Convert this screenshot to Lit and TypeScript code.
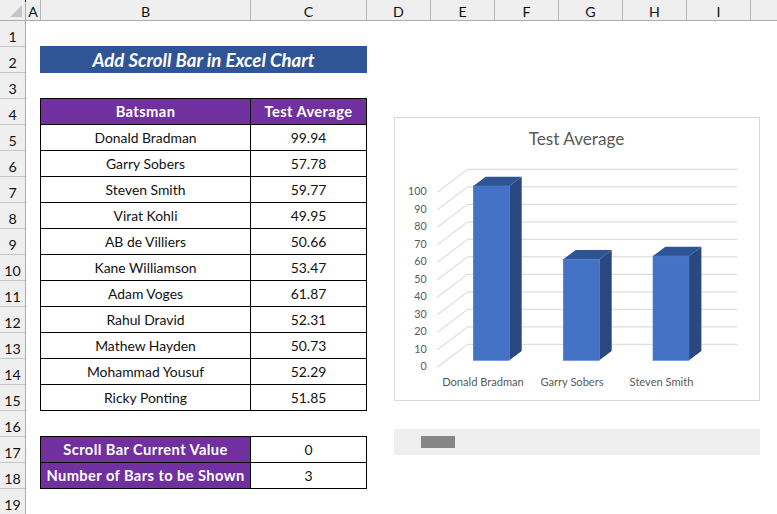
import { LitElement, html, css, svg } from "lit";
import { customElement } from "lit/decorators.js";

const COLS: [string, number][] = [["A", 15], ["B", 210], ["C", 116], ["D", 64], ["E", 64], ["F", 64], ["G", 64], ["H", 64], ["I", 64], ["", 26]];
const PLAYERS: [string, string][] = [
  ["Donald Bradman", "99.94"], ["Garry Sobers", "57.78"], ["Steven Smith", "59.77"], ["Virat Kohli", "49.95"],
  ["AB de Villiers", "50.66"], ["Kane Williamson", "53.47"], ["Adam Voges", "61.87"], ["Rahul Dravid", "52.31"],
  ["Mathew Hayden", "50.73"], ["Mohammad Yousuf", "52.29"], ["Ricky Ponting", "51.85"],
];
const ROWS = Array.from({ length: 19 }, (_, i) => i + 1);
const BARS = [{ x: 78.3, top: 68 }, { x: 168.3, top: 141.3 }, { x: 258, top: 138 }];
const TICKS = [0, 10, 20, 30, 40, 50, 60, 70, 80, 90, 100];

function chart() {
  const x0 = 42.3, x1 = 72.7, x2 = 342.3, front0 = 249.3, back0 = 226.3, step = 17.5;
  return svg`
    ${TICKS.map((t, i) => {
      const by = back0 - i * step, fy = front0 - i * step;
      return svg`
        <path class="grid" d="M${x0} ${fy}L${x1} ${by}L${x2} ${by}"></path>
        <text class="tick" x="31.7" y="${fy + 3}" text-anchor="end">${t}</text>`;
    })}
    ${BARS.map(({ x, top }) => svg`
      <path class="side" d="M${x + 36} ${top}l12.4 -9.3V233L${x + 36} 242.3Z"></path>
      <path class="cap" d="M${x} ${top}l12.4 -9.3h36L${x + 36} ${top}Z"></path>
      <rect class="front" x="${x}" y="${top}" width="36" height="${242.3 - top}"></rect>`)}
    <text class="title" x="181.5" y="27">Test Average</text>
    <text class="cat" x="88" y="268">Donald Bradman</text>
    <text class="cat" x="177" y="268">Garry Sobers</text>
    <text class="cat" x="266.5" y="268">Steven Smith</text>`;
}

@customElement("app-root")
export class AppRoot extends LitElement {
  static styles = css`
    :host { display: block; width: 777px; height: 514px; overflow: hidden; background: #fff; font-family: "Lato", "Liberation Sans", sans-serif; font-size: 13.9px; color: #111; }
    .heads { display: flex; height: 21px; background: #efefef; border-bottom: 1px solid #ababab; box-sizing: border-box; }
    .corner {
      width: 26px; flex: none; display: flex; align-items: flex-end; justify-content: flex-end; box-sizing: border-box; padding: 0 4px 3px 0;
      background: linear-gradient(#222, #222) 100% 0 / 1px 2px no-repeat, linear-gradient(#ababab, #ababab) 100% 0 / 1px 100% no-repeat;
    }
    .corner i { width: 0; height: 0; border-style: solid; border-width: 0 0 12px 12px; border-color: transparent transparent #c6c6c6 transparent; }
    .col { flex: none; box-sizing: border-box; border-right: 1px solid #b4b4b4; display: flex; align-items: center; justify-content: center; font-size: 14.2px; padding-top: 2px; }
    .col:last-child { border-right: 0; }
    .body { display: flex; height: 493px; }
    .rownums { width: 26px; flex: none; box-sizing: border-box; background: #efefef; border-right: 1px solid #ababab; }
    .rownum { height: 26px; box-sizing: border-box; border-bottom: 1px solid #c4c4c4; display: flex; align-items: center; justify-content: center; padding-top: 5px; font-size: 14.2px; }
    .sheet { flex: 1; display: flex; padding: 25px 0 0 14px; gap: 27px; }
    .left { width: 327px; flex: none; display: flex; flex-direction: column; }
    .banner { height: 27px; box-sizing: border-box; padding-top: 1px; background: #2f5597; color: #fff; font-size: 18.6px; font-weight: 700; font-style: italic; display: flex; align-items: center; justify-content: center; }
    .table { display: grid; grid-template-columns: 210px 116px; grid-auto-rows: 26px; box-sizing: border-box; border-top: 1px solid #000; border-left: 1px solid #000; width: 327px; }
    .table.players { margin-top: 25px; }
    .table.summary { margin-top: 25px; }
    .cell { box-sizing: border-box; border-right: 1px solid #000; border-bottom: 1px solid #000; display: flex; align-items: center; justify-content: center; }
    .cell.hd { background: #7030a0; color: #fff; font-weight: 700; font-size: 14.7px; letter-spacing: .4px; padding-bottom: 1px; white-space: nowrap; }
    .right { width: 366px; flex: none; padding-top: 71px; display: flex; flex-direction: column; }
    .chart { width: 366px; height: 284px; box-sizing: border-box; border: 1px solid #d9d9d9; display: block; }
    .chart svg { display: block; overflow: visible; }
    .grid { fill: none; stroke: #dedede; stroke-width: 1.2; }
    .tick, .cat { fill: #595959; }
    .tick { font-size: 10.7px; }
    .cat { font-size: 11.1px; text-anchor: middle; }
    .title { font-size: 17.2px; fill: #595959; text-anchor: middle; }
    .front { fill: #4472c4; stroke: #4a78cb; stroke-width: .6; }
    .side { fill: #2a4780; }
    .cap { fill: #2f5496; }
    .scroll { margin-top: 28px; height: 26px; background: #efefef; display: flex; align-items: center; padding-left: 27px; }
    .thumb { width: 34px; height: 12px; background: #868686; }
  `;

  render() {
    return html`
      <div class="heads">
        <div class="corner"><i></i></div>
        ${COLS.map(([n, w]) => html`<div class="col" style="width:${w}px">${n}</div>`)}
      </div>
      <div class="body">
        <div class="rownums">${ROWS.map((r) => html`<div class="rownum">${r}</div>`)}</div>
        <div class="sheet">
          <div class="left">
            <div class="banner">Add Scroll Bar in Excel Chart</div>
            <div class="table players">
              <div class="cell hd">Batsman</div><div class="cell hd">Test Average</div>
              ${PLAYERS.map(([n, v]) => html`<div class="cell">${n}</div><div class="cell">${v}</div>`)}
            </div>
            <div class="table summary">
              <div class="cell hd">Scroll Bar Current Value</div><div class="cell">0</div>
              <div class="cell hd">Number of Bars to be Shown</div><div class="cell">3</div>
            </div>
          </div>
          <div class="right">
            <div class="chart"><svg width="364" height="282" viewBox="0 0 364 282">${chart()}</svg></div>
            <div class="scroll"><div class="thumb"></div></div>
          </div>
        </div>
      </div>
    `;
  }
}
